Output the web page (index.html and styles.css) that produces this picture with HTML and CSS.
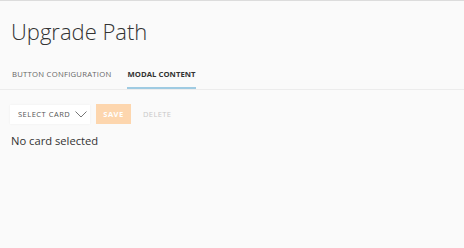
FILE: index.html
```html
<!DOCTYPE html>
<html lang="en">
<head>
    <meta charset="UTF-8">
    <meta name="viewport" content="width=device-width, initial-scale=1.0">
    <title>Upgrade Path</title>
    <link rel="stylesheet" href="styles.css">
</head>
<body>

<header class="page-header">
    <h1>Upgrade Path</h1>
</header>

<!-- Tabs -->
<nav class="tabs">
    <a href="#" class="tab">Button Configuration</a>
    <a href="#" class="tab active">Modal Content</a>
</nav>

<section class="content">
    <div class="toolbar">
        <button class="select-card">
            Select Card
            <svg width="12" height="7" viewBox="0 0 12 7"><path d="M0.5 0.5 L6 6 L11.5 0.5" fill="none" stroke="#666" stroke-width="0.9"/></svg>
        </button>
        <button class="save-button">Save</button>
        <button class="delete-button">Delete</button>
    </div>
    <p class="empty">No card selected</p>
</section>

</body>
</html>
```

FILE: styles.css
```css
/* general page */
body {
    font-family: "Open Sans", sans-serif;
    margin: 0;
    padding: 0;
    background-color: #fafafa;
    border-top: 1px solid #dcdcdc;
    color: #333;
}

.page-header {
    padding: 15px 11px;
    height: 30px;
}

.page-header h1 {
    margin: 0;
    font-size: 22px;
    font-weight: 300;
    line-height: 30px;
    color: #333;
}

/* tabs */
.tabs {
    display: flex;
    gap: 16px;
    padding: 0 12px;
    border-bottom: 1px solid #ececec;
}

.tab {
    display: flex;
    align-items: center;
    height: 26px;
    font-size: 7.7px;
    letter-spacing: 0.25px;
    text-transform: uppercase;
    color: #666;
    text-decoration: none;
    border-bottom: 2px solid transparent;
}

.tab.active {
    font-weight: 700;
    letter-spacing: 0.05px;
    color: #333;
    border-bottom-color: #9fcbe2;
}

/* content */
.content {
    padding: 14px 10px;
}

.toolbar {
    display: flex;
    align-items: center;
    gap: 6px;
}

button {
    font-family: "Open Sans", sans-serif;
    font-size: 7.5px;
    letter-spacing: 0.5px;
    text-transform: uppercase;
    border: none;
    cursor: pointer;
}

.select-card {
    display: flex;
    align-items: center;
    gap: 5px;
    height: 19px;
    width: 80px;
    padding: 0 0 0 8px;
    background-color: #fff;
    color: #555;
    box-shadow: 0 0 2px rgba(0, 0, 0, 0.06);
}

.save-button {
    height: 20px;
    width: 35px;
    padding: 0;
    background-color: #fdd6ae;
    color: #fff;
    font-weight: 700;
}

.delete-button {
    height: 20px;
    padding: 0 0 0 6px;
    background: none;
    color: #c8c8c8;
    letter-spacing: 0.4px;
}

.empty {
    margin: 9px 1px;
    font-size: 11.2px;
    color: #333;
}
```
